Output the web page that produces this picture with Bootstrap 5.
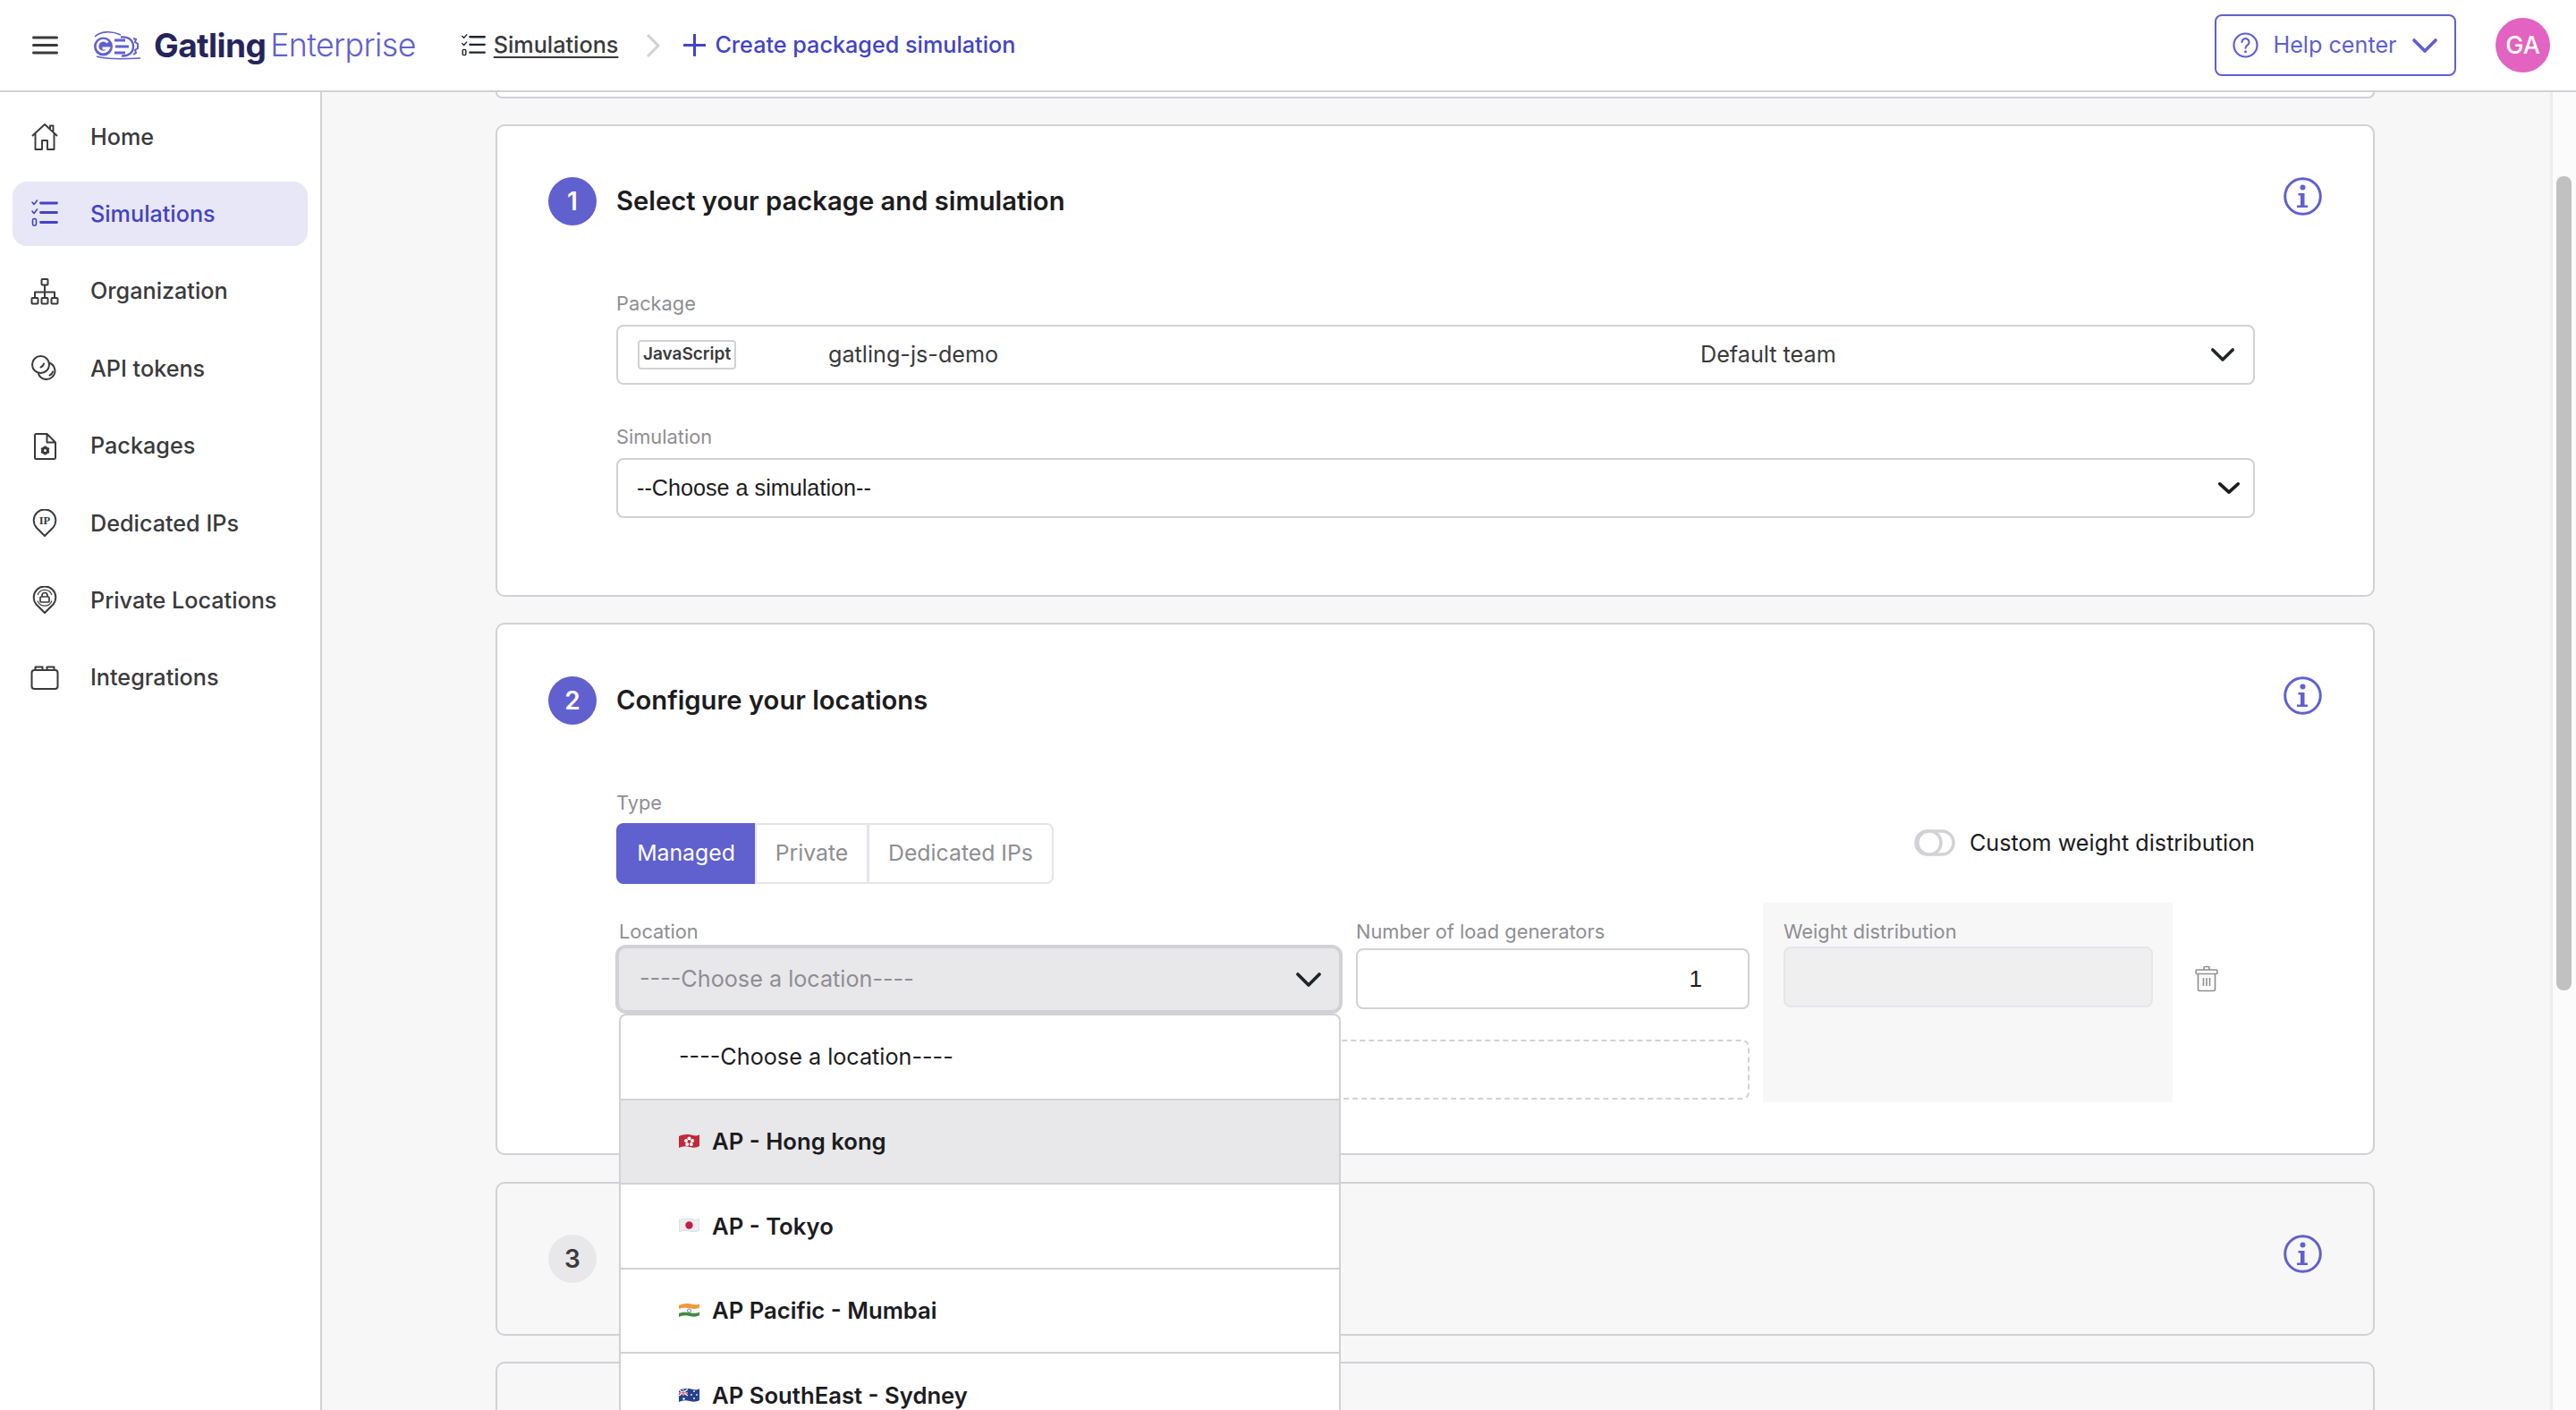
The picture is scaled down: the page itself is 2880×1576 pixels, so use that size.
<!DOCTYPE html>
<html lang="en">
<head>
<meta charset="utf-8">
<title>Gatling Enterprise</title>
<link href="https://cdn.jsdelivr.net/npm/bootstrap@5.3.0/dist/css/bootstrap.min.css" rel="stylesheet">
<style>
:root{--ge-blue:#6060cf;--ge-link:#4343c5;--ge-line:#d1d1d6;--ge-soft:#e8e8eb;--ge-bg:#f7f7f7;--ge-ink:#1c1c1e;--ge-text:#3a3a3c;--ge-mute:#8e8e93}
html,body{height:100%}
body{font-family:Inter,"Noto Sans",sans-serif;font-size:25.2px;color:var(--ge-text);overflow:hidden;background:#fff;line-height:1.3}
svg{display:block;flex:none}
.top-bar{height:103px;border-bottom:2px solid var(--ge-line);padding:0 29px 0 36px}
.burger{width:29px;margin-right:37px}
.logo-mark{width:55px;height:32px;margin-right:15px}
.logo-word{font-size:37px;line-height:1;letter-spacing:-.6px}
.logo-g{font-weight:700;color:#24255c}
.logo-e{font-weight:300;font-size:35.7px;color:var(--ge-blue);margin-left:5px}
.crumbs{margin-left:50px}
.crumb-link{color:var(--ge-text);text-decoration:underline;font-weight:500;text-underline-offset:4px}
.crumb-sep{margin:0 26px 0 31px}
.crumb-new{color:var(--ge-link);font-weight:500;margin-left:10px}
.help-btn{width:270px;height:69px;border:2px solid var(--ge-blue);border-radius:8px;color:var(--ge-blue);font-size:25.2px;padding:0;--bs-btn-hover-color:var(--ge-blue);--bs-btn-hover-border-color:var(--ge-blue)}
.ge-avatar{width:61px;height:61px;background:#e263c1;color:#fff;font-size:27px;font-weight:500;margin-left:44px}
.shell{height:calc(100% - 103px)}
.side{width:360px;border-right:2px solid var(--ge-line);padding:14px 14px 0}
.side-link{height:72px;margin-bottom:14.4px;border-radius:16px;color:var(--ge-text);font-weight:500;padding:0 0 0 20px;gap:35px}
.side-link svg{width:32px;height:32px}
.side-link:hover{color:var(--ge-text)}
.side-link.active{background:#e8e7f7;color:var(--ge-link)}
.stage{background:var(--ge-bg);min-width:0;overflow:hidden}
.flow{padding:0 196px 0 194px}
.stub{height:7px;border:2px solid var(--ge-line);border-top:0;border-radius:0 0 10px 10px;background:#fff;margin-bottom:29px}
.step{border:2px solid var(--ge-line);border-radius:10px;background:#fff;padding:57px 57px 0}
.step-one{padding-top:57px;padding-bottom:86px;margin-bottom:29px}
.step-two{padding-top:58px;padding-bottom:57px;margin-bottom:30px}
.step-three{background:var(--ge-bg);padding-bottom:57px;margin-bottom:29px}
.step-four{background:var(--ge-bg);height:200px}
.step-num{width:54px;height:54px;background:var(--ge-blue);color:#fff;font-weight:600;font-size:28px}
.step-num-off{background:var(--ge-soft);color:var(--ge-text)}
.step-title{font-size:29.2px;font-weight:600;color:var(--ge-ink);margin:0 0 0 22px}
.info-ico{width:43px;height:43px;color:var(--ge-blue)}
.step-body{margin:72px 75px 0 76px}
.lab{display:block;font-size:21.8px;line-height:30px;color:var(--ge-mute);margin:0 0 9px}
.ctl{height:67px;border:2px solid var(--ge-line);border-radius:8px;background:#fff;color:var(--ge-text)}
.pkg{padding:0 20px 0 22px}
.lang-tag{width:110px;height:33px;border:2px solid var(--ge-line);border-radius:4px;font-size:19px;font-weight:600;color:var(--ge-text)}
.pkg-name{margin-left:103px;width:975px}
.native-sel{font-family:"Liberation Sans",Arial,sans-serif;font-size:25.2px;color:var(--ge-ink);padding:0 50px 0 21px;--bs-form-select-bg-img:none;background-image:url("data:image/svg+xml,%3Csvg xmlns='http://www.w3.org/2000/svg' viewBox='0 0 28 16'%3E%3Cpath d='M3 3l11 10L25 3' fill='none' stroke='%231c1c1e' stroke-width='4' stroke-linecap='round' stroke-linejoin='round'/%3E%3C/svg%3E");background-repeat:no-repeat;background-size:26px 15px;background-position:right 14px center;box-shadow:none}
.field-gap{margin-top:43px}
.type-lab{margin-bottom:8px}
.seg{border:0;border-radius:8px}
.seg .btn{height:68px;font-size:24.8px;padding:0;border:2px solid #e5e5ea;background:#fff;color:var(--ge-mute);border-radius:8px;white-space:nowrap}
.seg .btn.is-on{background:var(--ge-blue);border-color:var(--ge-blue);color:#fff;width:156px}
.seg-priv{width:127px}
.seg-ded{width:208px}
.weight-switch{margin-top:14px;gap:16px;color:var(--ge-ink)}
.sw-ico{width:46px;height:30px}
.loc-row{margin-top:21px}
.loc-left{width:1267px;padding:17px 0 3px 3px}
.loc-col{width:805px;position:relative}
.num-col{width:440px;margin-left:19px}
.loc-lab{margin-bottom:4px}
.loc-ctl{height:69px;padding:0 19px 0 23px;background:var(--ge-soft);color:var(--ge-mute);border:0;box-shadow:0 0 0 4px var(--ge-line)}
.num-ctl{height:68px;text-align:right;font-family:"Liberation Sans",Arial,sans-serif;font-size:26px;color:var(--ge-ink);padding:0 51px 0 0;border:2px solid var(--ge-line);border-radius:8px;box-shadow:none}
.add-box{height:67px;border:2px dashed var(--ge-line);border-radius:8px;margin:33px 0 0 0}
.weight-box{width:458px;margin-left:15px;background:var(--ge-bg);padding:17px 22px 0 23px}
.weight-box .loc-lab{margin-bottom:2px}
.weight-in{height:68px;background:#efeff0;border:2px solid #e5e5ea;border-radius:8px}
.bin{width:28px;height:30px;margin:70px 0 0 24px;color:var(--ge-mute)}
.loc-menu{position:absolute;left:0;top:107px;width:807px;z-index:20;border:2px solid var(--ge-line);border-radius:8px 8px 0 0;overflow:hidden;--bs-list-group-border-width:0}
.loc-item{height:94.6px;padding:0 0 0 65px;gap:14px;font-weight:600;color:var(--ge-ink);border-bottom:2px solid var(--ge-line)!important;font-size:25.7px}
.loc-item.plain{font-weight:400;font-size:25.2px}
.loc-item.hot{background:var(--ge-soft)}
.flag-ico{width:23px;height:18px}
.rail{width:29px;background:#fbfbfb;border-left:3px solid #ececec;padding:94px 5px 0 4px}
.rail-thumb{height:910px;background:#c1c1c1;border-radius:8px}
</style>
</head>
<body>
<svg class="d-none" xmlns="http://www.w3.org/2000/svg">
  <symbol id="i-info" viewBox="0 0 43 43"><circle cx="21.5" cy="21.5" r="19.8" fill="none" stroke="currentColor" stroke-width="3"/><circle cx="21.5" cy="11.5" r="3" fill="currentColor"/><path d="M16.5 18h7v13.5h3.5v2.5H15v-2.500h4V20.500h-2.500z" fill="currentColor"/></symbol>
  <symbol id="i-list" viewBox="0 0 32 32"><g fill="none" stroke="currentColor" stroke-width="1.600" stroke-linecap="round" stroke-linejoin="round"><path d="M2 3l2 2.500L7.500 1M2 13l2 2.500L7.500 11"/><rect x="2.500" y="21.500" width="4" height="7.500" rx="1.500"/></g><path d="M11.500 4h18M11.500 14.500h18M11.500 25.500h18" stroke="currentColor" stroke-width="2.800" stroke-linecap="round"/></symbol>
  <symbol id="i-chev" viewBox="0 0 30 18"><path d="M3 3l12 12L27 3" fill="none" stroke="currentColor" stroke-width="3.800" stroke-linecap="round" stroke-linejoin="round"/></symbol>
</svg>

<header class="top-bar navbar d-flex flex-nowrap align-items-center justify-content-start bg-white">
  <svg class="burger" viewBox="0 0 29 21" height="21"><path d="M1.500 2h26M1.500 10.500h26M1.500 19h26" stroke="#3a3a3c" stroke-width="3" stroke-linecap="round"/></svg>
  <svg class="logo-mark" viewBox="0 0 55 32" fill="none">
    <path d="M4 6C10 0 22-1 33 4" stroke="#6060cf" stroke-width="1.600"/>
    <circle cx="13.500" cy="17" r="10.500" fill="#6060cf"/>
    <path d="M18.500 12.500a6.500 6.500 0 1 0 1 6.500h-7" stroke="#fff" stroke-width="2.800"/>
    <path d="M26 10h12M27 17h15M26 24h12" stroke="#6060cf" stroke-width="2.800"/>
    <path d="M33 6.500c9-1 14 4 14 10.500s-5 11-13 10.500" stroke="#6060cf" stroke-width="2.400"/>
    <path d="M47 8l3 1-1 3 3 2v5l-3 2 1 3-3 2" stroke="#6060cf" stroke-width="2"/>
    <path d="M6 28c12 4 32 3 49 2" stroke="#6060cf" stroke-width="1.600"/>
  </svg>
  <span class="logo-word d-flex align-items-center"><span class="logo-g">Gatling</span><span class="logo-e">Enterprise</span></span>
  <nav class="crumbs d-flex align-items-center">
    <svg width="29" height="26" viewBox="0 0 32 32" class="me-2 text-body" preserveAspectRatio="none"><use href="#i-list"/></svg>
    <a class="crumb-link" href="#">Simulations</a>
    <svg class="crumb-sep" width="16" height="28" viewBox="0 0 16 28"><path d="M2 2l12 12L2 26" fill="none" stroke="#d1d1d6" stroke-width="3" stroke-linejoin="round"/></svg>
    <svg width="25" height="25" viewBox="0 0 25 25"><path d="M12.500 1v23M1 12.500h23" stroke="#4343c5" stroke-width="3" stroke-linecap="round"/></svg>
    <span class="crumb-new">Create packaged simulation</span>
  </nav>
  <button class="btn help-btn ms-auto d-flex align-items-center justify-content-center" type="button">
    <svg width="29" height="29" viewBox="0 0 29 29" class="me-3"><circle cx="14.500" cy="14.500" r="13" fill="none" stroke="currentColor" stroke-width="2.200"/><path d="M10.500 11a4 4 0 1 1 6.500 3.200c-1.500 1-2.500 1.800-2.500 3.500" fill="none" stroke="currentColor" stroke-width="2.200" stroke-linecap="round"/><circle cx="14.500" cy="21.700" r="1.500" fill="currentColor"/></svg>
    Help center
    <svg width="30" height="18" viewBox="0 0 30 18" class="ms-3"><use href="#i-chev"/></svg>
  </button>
  <div class="ge-avatar rounded-circle d-flex align-items-center justify-content-center">GA</div>
</header>

<div class="shell d-flex">
  <nav class="side nav flex-column flex-nowrap flex-shrink-0 bg-white">
    <a class="side-link nav-link d-flex align-items-center" href="#">
      <svg viewBox="0 0 32 32" fill="none" stroke="currentColor" stroke-width="1.900" stroke-linejoin="round"><path d="M2 15L16 2l14 13M5.500 12.500V30h7.500V20h6v10h7.500V12.500M22 8V3.500h3.500v7.500"/></svg>Home</a>
    <a class="side-link nav-link active d-flex align-items-center" href="#"><svg><use href="#i-list"/></svg>Simulations</a>
    <a class="side-link nav-link d-flex align-items-center" href="#">
      <svg viewBox="0 0 32 32" fill="none" stroke="currentColor" stroke-width="2" stroke-linejoin="round"><rect x="12.500" y="2" width="7" height="6.500" rx="1"/><rect x="1.500" y="23" width="7" height="6.500" rx="1"/><rect x="12.500" y="23" width="7" height="6.500" rx="1"/><rect x="23.500" y="23" width="7" height="6.500" rx="1"/><path d="M16 8.500V23M5 23v-6.500h22V23"/></svg>Organization</a>
    <a class="side-link nav-link d-flex align-items-center" href="#">
      <svg viewBox="0 0 32 32" fill="none" stroke="currentColor" stroke-width="2" stroke-linecap="round"><circle cx="11.500" cy="11.500" r="9.500"/><path d="M21 9.500a9.500 9.500 0 1 1-12 12.300"/><path d="M15 10.500c-.5 2-1.800 3.400-3.500 4M25 19.500c-.5 2-1.800 3.400-3.500 4"/></svg>API tokens</a>
    <a class="side-link nav-link d-flex align-items-center" href="#">
      <svg viewBox="0 0 32 32" fill="none" stroke="currentColor" stroke-width="2" stroke-linejoin="round"><path d="M5 3.500a1.500 1.500 0 0 1 1.500-1.500h12L28 11.500V28.500a1.500 1.500 0 0 1-1.500 1.500h-20A1.500 1.500 0 0 1 5 28.500zM18.500 2v9.500H28"/><circle cx="16.500" cy="20.500" r="3" stroke-width="3"/><path d="M16.500 15.500v1.800M16.500 23.700v1.800M12 18l1.700 1M19.300 22l1.700 1M12 23l1.700-1M19.300 19l1.700-1" stroke-width="2"/></svg>Packages</a>
    <a class="side-link nav-link d-flex align-items-center" href="#">
      <svg viewBox="0 0 32 32" fill="none" stroke="currentColor" stroke-width="2" stroke-linejoin="round"><path d="M16 30L6.500 20.500A12.300 12.300 0 1 1 25.500 20.500z"/><text x="16" y="17" text-anchor="middle" font-family="Liberation Serif,serif" font-size="12.500" font-weight="700" fill="currentColor" stroke="none">IP</text></svg>Dedicated IPs</a>
    <a class="side-link nav-link d-flex align-items-center" href="#">
      <svg viewBox="0 0 32 32" fill="none" stroke="currentColor" stroke-width="2" stroke-linejoin="round"><path d="M16 30L6.500 20.500A12.300 12.300 0 1 1 25.500 20.500z"/><path d="M8 10a8.500 8.500 0 0 1 16 0M8 16.500a8.500 8.500 0 0 0 16 0" stroke-width="1.200"/><rect x="11" y="12" width="10" height="6" rx="1" stroke-width="1.700"/><path d="M13 12v-1.500a3 3 0 0 1 6 0V12" stroke-width="1.700"/></svg>Private Locations</a>
    <a class="side-link nav-link d-flex align-items-center" href="#">
      <svg viewBox="0 0 32 32" fill="none" stroke="currentColor" stroke-width="2" stroke-linejoin="round"><rect x="1.500" y="7" width="29" height="21" rx="3"/><path d="M5.500 7V3.500h8V7M18.500 7V3.500h8V7"/></svg>Integrations</a>
  </nav>

  <main class="stage flex-grow-1 d-flex">
    <div class="flow flex-grow-1 overflow-hidden">
      <div class="stub"></div>

      <section class="step step-one">
        <div class="d-flex align-items-start">
          <span class="step-num rounded-circle d-flex align-items-center justify-content-center flex-shrink-0">1</span>
          <h2 class="step-title align-self-center flex-grow-1">Select your package and simulation</h2>
          <svg class="info-ico"><use href="#i-info"/></svg>
        </div>
        <div class="step-body">
          <label class="lab">Package</label>
          <div class="ctl pkg d-flex align-items-center">
            <span class="lang-tag d-flex align-items-center justify-content-center flex-shrink-0">JavaScript</span>
            <span class="pkg-name flex-shrink-0">gatling-js-demo</span>
            <span class="flex-grow-1">Default team</span>
            <svg width="28" height="17" viewBox="0 0 30 18" class="text-dark"><use href="#i-chev"/></svg>
          </div>
          <div class="field-gap">
            <label class="lab" for="simSel">Simulation</label>
            <select id="simSel" class="form-select ctl native-sel"><option>--Choose a simulation--</option></select>
          </div>
        </div>
      </section>

      <section class="step step-two">
        <div class="d-flex align-items-start">
          <span class="step-num rounded-circle d-flex align-items-center justify-content-center flex-shrink-0">2</span>
          <h2 class="step-title align-self-center flex-grow-1">Configure your locations</h2>
          <svg class="info-ico"><use href="#i-info"/></svg>
        </div>
        <div class="step-body">
          <div class="d-flex justify-content-between align-items-center">
            <div>
              <label class="lab type-lab">Type</label>
              <div class="btn-group seg" role="group">
                <button type="button" class="btn is-on">Managed</button>
                <button type="button" class="btn seg-priv">Private</button>
                <button type="button" class="btn seg-ded">Dedicated IPs</button>
              </div>
            </div>
            <div class="weight-switch d-flex align-items-center">
              <svg class="sw-ico" viewBox="0 0 46 30"><rect x="2" y="2" width="42" height="26" rx="13" fill="#fff" stroke="#d1d1d6" stroke-width="3.500"/><circle cx="17" cy="15" r="13" fill="#fff" stroke="#d1d1d6" stroke-width="3.500"/></svg>
              <span>Custom weight distribution</span>
            </div>
          </div>
          <div class="loc-row d-flex align-items-stretch">
            <div class="loc-left flex-shrink-0">
              <div class="d-flex">
                <div class="loc-col">
                  <label class="lab loc-lab">Location</label>
                  <div class="ctl loc-ctl d-flex align-items-center justify-content-between">
                    <span>----Choose a location----</span>
                    <svg width="30" height="18" class="text-dark"><use href="#i-chev"/></svg>
                  </div>
                  <ul class="loc-menu list-group list-unstyled m-0">
                    <li class="list-group-item loc-item plain d-flex align-items-center">----Choose a location----</li>
                    <li class="list-group-item loc-item hot d-flex align-items-center">
                      <svg class="flag-ico" viewBox="0 0 23 18"><path d="M0 3C6 0 12 1 16 2s6 0 7-1v13c-3 2-7 2-11 1s-8-1-12 1z" fill="#c0293a"/><g fill="#fff"><circle cx="11.500" cy="5.500" r="2"/><circle cx="15" cy="8" r="2"/><circle cx="13.800" cy="12" r="2"/><circle cx="9.200" cy="12" r="2"/><circle cx="8" cy="8" r="2"/></g><circle cx="11.500" cy="9" r="1" fill="#c0293a"/></svg>
                      AP - Hong kong</li>
                    <li class="list-group-item loc-item d-flex align-items-center">
                      <svg class="flag-ico" viewBox="0 0 23 18"><path d="M0 3C6 0 12 1 16 2s6 0 7-1v13c-3 2-7 2-11 1s-8-1-12 1z" fill="#eceef0" stroke="#cfd0d4" stroke-width=".7"/><circle cx="11.500" cy="8.500" r="4.200" fill="#c5203f"/></svg>
                      AP - Tokyo</li>
                    <li class="list-group-item loc-item d-flex align-items-center">
                      <svg class="flag-ico" viewBox="0 0 23 18"><path d="M0 3C6 0 12 1 16 2s6 0 7-1v4.500c-3 2-7 1.500-11 .7s-8-.7-12 .8z" fill="#ee9b3c"/><path d="M0 7.500c4-1.500 8-1.500 12-.7s8 1.300 11-.7v4.500c-3 2-7 1.500-11 .7s-8-.7-12 .8z" fill="#f6f6f6"/><path d="M0 12c4-1.500 8-1.500 12-.7s8 1.300 11-.7V14c-3 2-7 2-11 1s-8-1-12 1z" fill="#3f8a3c"/><circle cx="11.500" cy="9" r="2" fill="none" stroke="#5b5fa8" stroke-width=".8"/></svg>
                      AP Pacific - Mumbai</li>
                    <li class="list-group-item loc-item d-flex align-items-center">
                      <svg class="flag-ico" viewBox="0 0 23 18"><path d="M0 3C6 0 12 1 16 2s6 0 7-1v13c-3 2-7 2-11 1s-8-1-12 1z" fill="#24408e"/><path d="M0 2.500L10 9M10 1.800L0 9M5 1.800V9M0 5.800h10" stroke="#fff" stroke-width="1.400"/><path d="M5 1.800V9M0 5.800h10" stroke="#c8283c" stroke-width=".8"/><g fill="#fff"><circle cx="5.500" cy="12.500" r="1.200"/><circle cx="17" cy="4" r=".9"/><circle cx="14" cy="8" r=".9"/><circle cx="20" cy="8" r=".9"/><circle cx="17" cy="12" r=".9"/></g></svg>
                      AP SouthEast - Sydney</li>
                  </ul>
                </div>
                <div class="num-col">
                  <label class="lab loc-lab">Number of load generators</label>
                  <input class="form-control num-ctl" type="text" value="1" aria-label="Number of load generators">
                </div>
              </div>
              <div class="add-box"></div>
            </div>
            <div class="weight-box flex-shrink-0">
              <label class="lab loc-lab">Weight distribution</label>
              <div class="weight-in"></div>
            </div>
            <svg class="bin" viewBox="0 0 28 30" fill="none" stroke="currentColor" stroke-width="1.600" stroke-linejoin="round"><path d="M11 5V2.500a1 1 0 0 1 1-1h4a1 1 0 0 1 1 1V5"/><rect x="2" y="5" width="24" height="4.500" rx="1.500"/><path d="M4.500 9.500V27a1.500 1.500 0 0 0 1.500 1.500h16a1.500 1.500 0 0 0 1.500-1.500V9.500M10.500 14v9M14 14v9M17.500 14v9"/></svg>
          </div>
        </div>
      </section>

      <section class="step step-three">
        <div class="d-flex align-items-start justify-content-between">
          <span class="step-num step-num-off rounded-circle d-flex align-items-center justify-content-center flex-shrink-0">3</span>
          <svg class="info-ico"><use href="#i-info"/></svg>
        </div>
      </section>
      <section class="step step-four"></section>
    </div>
    <div class="rail flex-shrink-0"><div class="rail-thumb"></div></div>
  </main>
</div>
<script src="https://cdn.jsdelivr.net/npm/bootstrap@5.3.0/dist/js/bootstrap.bundle.min.js"></script>
</body>
</html>
